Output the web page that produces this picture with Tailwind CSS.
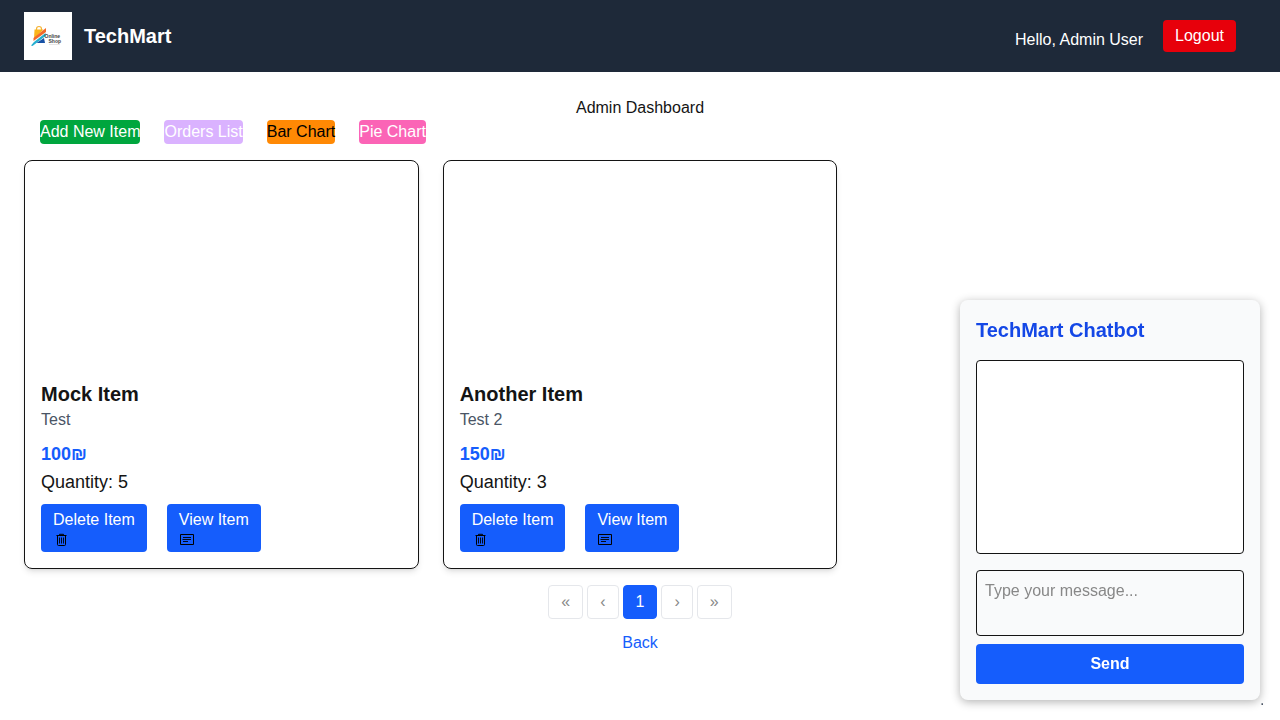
<!DOCTYPE html>
<html lang="en">
<head>
<meta charset="utf-8">
<meta name="viewport" content="width=device-width, initial-scale=1">
<title>TechMart</title>
<script src="https://cdn.jsdelivr.net/npm/@tailwindcss/browser@4"></script>
</head>
<body class="min-h-screen bg-white font-['Liberation_Sans',Arial,sans-serif] text-base text-[#141414]">
<svg class="hidden" aria-hidden="true">
  <symbol id="trash" viewBox="0 0 16 16">
    <path d="M6.500 3V2.300h4V3M3.500 3.500h10M4.500 4v8.500q0 1 1 1h6q1 0 1-1V4" fill="none" stroke="currentColor"/>
    <path d="M6.500 5.500v6M8.500 5.500v6M10.500 5.500v6" fill="none" stroke="currentColor" stroke-width=".9"/>
  </symbol>
  <symbol id="view" viewBox="0 0 16 16">
    <path d="M1.500 2.500h13v10h-13z" fill="none" stroke="currentColor"/>
    <path d="M4 5.500h8M3.500 7.500h8.500M4 9.500h5" fill="none" stroke="currentColor" stroke-width=".9"/>
  </symbol>
</svg>

<header class="flex items-center justify-between bg-[#1e2939] py-3 pr-11 pl-6 text-white">
  <div class="flex items-center gap-3">
    <svg class="size-12" viewBox="0 0 48 48" role="img" aria-label="Online Shop">
      <path fill="#fff" d="M0 0h48v48H0z"/>
      <path d="M12.500 18v-1a2.500 2.500 0 0 1 5 0v1" fill="none" stroke="#f5b335" stroke-width="1.200"/>
      <path d="M10.500 17.500h9L10 27z" fill="#fbb51b"/>
      <path d="M22 16v4L9.500 29v-3z" fill="#f26a2b"/>
      <path d="M21.500 21v3L8.500 34l-1.500-.5L10 30z" fill="#25afd0"/>
      <path d="M20 26l1 5h-8.500z" fill="#1751a5"/>
      <text x="20.500" y="25.500" font-family="Liberation Sans, sans-serif" font-size="5" font-weight="700" fill="#444">Online</text>
      <text x="24.500" y="30.500" font-family="Liberation Sans, sans-serif" font-size="5" font-weight="700" fill="#444">Shop</text>
      <path d="M25 32.500h11" stroke="#ddd" stroke-width=".7"/>
    </svg>
    <span class="text-xl font-bold">TechMart</span>
  </div>
  <div class="flex items-end gap-5">
    <span>Hello, Admin User</span>
    <button type="button" class="rounded-sm bg-[#e7000b] px-3 py-1">Logout</button>
  </div>
</header>

<main class="px-6 pt-6">
  <h1 class="text-center">Admin Dashboard</h1>
  <nav class="flex gap-6 px-4" aria-label="Admin">
    <a href="#" class="rounded-sm bg-[#00a63e] text-white">Add New Item</a>
    <a href="#" class="rounded-sm bg-[#dab2ff] text-white">Orders List</a>
    <a href="#" class="rounded-sm bg-[#ff8904] text-black">Bar Chart</a>
    <a href="#" class="rounded-sm bg-[#fb64b6] text-white">Pie Chart</a>
  </nav>

  <section class="mt-4 grid grid-cols-3 gap-6">
    <article class="rounded-lg border border-[#141414] p-4 shadow-md">
      <div class="h-[203px]"></div>
      <h2 class="text-xl font-bold">Mock Item</h2>
      <p class="text-[#4a5565]">Test</p>
      <p class="mt-2 text-lg font-bold text-[#155dfc]">100₪</p>
      <p class="text-lg">Quantity: 5</p>
      <div class="mt-2 flex gap-5">
        <button type="button" class="rounded-sm bg-[#155dfc] px-3 py-1 text-left text-white">Delete Item<svg class="size-4 text-black" aria-hidden="true"><use href="#trash"/></svg></button>
        <button type="button" class="rounded-sm bg-[#155dfc] px-3 py-1 text-left text-white">View Item<svg class="size-4 text-black" aria-hidden="true"><use href="#view"/></svg></button>
      </div>
    </article>
    <article class="rounded-lg border border-[#141414] p-4 shadow-md">
      <div class="h-[203px]"></div>
      <h2 class="text-xl font-bold">Another Item</h2>
      <p class="text-[#4a5565]">Test 2</p>
      <p class="mt-2 text-lg font-bold text-[#155dfc]">150₪</p>
      <p class="text-lg">Quantity: 3</p>
      <div class="mt-2 flex gap-5">
        <button type="button" class="rounded-sm bg-[#155dfc] px-3 py-1 text-left text-white">Delete Item<svg class="size-4 text-black" aria-hidden="true"><use href="#trash"/></svg></button>
        <button type="button" class="rounded-sm bg-[#155dfc] px-3 py-1 text-left text-white">View Item<svg class="size-4 text-black" aria-hidden="true"><use href="#view"/></svg></button>
      </div>
    </article>
  </section>

  <nav class="mt-4 flex justify-center gap-1 text-[#888888]" aria-label="Pagination">
    <button type="button" class="rounded-sm border border-gray-200 px-3 py-1">«</button>
    <button type="button" class="rounded-sm border border-gray-200 px-3 py-1">‹</button>
    <button type="button" class="rounded-sm border border-[#155dfc] bg-[#155dfc] px-3 py-1 text-white">1</button>
    <button type="button" class="rounded-sm border border-gray-200 px-3 py-1">›</button>
    <button type="button" class="rounded-sm border border-gray-200 px-3 py-1">»</button>
  </nav>
  <div class="mt-3 text-center"><a href="#" class="text-[#155dfc]">Back</a></div>
</main>

<aside class="fixed right-5 bottom-5 w-[300px] rounded-lg bg-gray-50 p-4 shadow-[0_2px_10px_rgba(0,0,0,0.3)]">
  <h2 class="text-xl font-bold text-[#1447e6]">TechMart Chatbot</h2>
  <div class="mt-4 h-[194px] rounded-sm border border-[#141414] bg-white"></div>
  <textarea rows="2" aria-label="Message" placeholder="Type your message..." class="mt-4 block w-full resize-none rounded-sm border border-[#141414] p-2 placeholder:text-[#888888]"></textarea>
  <button type="button" class="mt-2 w-full rounded-sm bg-[#155dfc] py-2 font-bold text-white">Send</button>
  <span class="absolute -bottom-3 left-full text-[#4a5565]">.</span>
</aside>
</body>
</html>
